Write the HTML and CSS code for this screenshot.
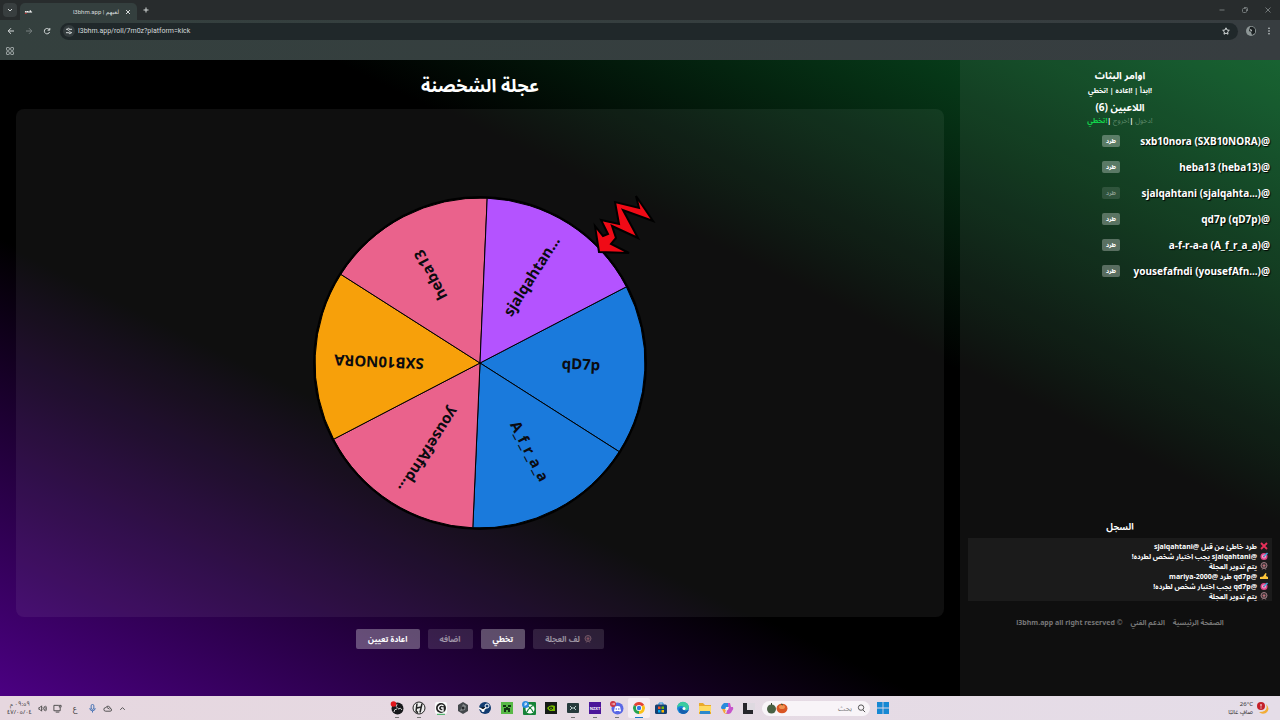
FILE: index.html
```html
<!DOCTYPE html>
<html lang="ar">
<head>
    <meta charset="UTF-8">
    <meta name="viewport" content="width=device-width, initial-scale=1.0">
    <title>لعبهم | l3bhm.app</title>
    <link rel="stylesheet" href="styles.css">
</head>
<body>

<!-- Browser bar -->
<header class="browser">
    <div class="tabs">
        <button class="tab-menu" aria-label="Search tabs"><svg class="icon" viewBox="0 0 8 8"><path d="M2 3l2 2 2-2"/></svg></button>
        <div class="tab">
            <svg class="favicon" viewBox="0 0 10 8"><path d="M1 4h8M2 3v1M4 3v1M7 2v2" stroke="#fff" stroke-width="1.2"/><path d="M1 5.5h2" stroke="#d33"/></svg>
            <span class="tab-title" dir="rtl">لعبهم | l3bhm.app</span>
            <button aria-label="Close"><svg class="icon" viewBox="0 0 8 8"><path d="M2 2l4 4M6 2l-4 4"/></svg></button>
        </div>
        <button class="new-tab" aria-label="New tab"><svg class="icon" viewBox="0 0 8 8"><path d="M4 1.5v5M1.5 4h5"/></svg></button>
        <div class="window-buttons">
            <button aria-label="Minimize"><svg class="icon" viewBox="0 0 8 8"><path d="M1.5 4h5"/></svg></button>
            <button aria-label="Restore"><svg class="icon" viewBox="0 0 8 8"><rect x="1.5" y="2.5" width="4" height="4" rx="1"/><path d="M3 1.5h2.500q1 0 1 1V5"/></svg></button>
            <button aria-label="Close window"><svg class="icon" viewBox="0 0 8 8"><path d="M1.5 1.5l5 5M6.500 1.500l-5 5"/></svg></button>
        </div>
    </div>
    <div class="toolbar">
        <button aria-label="Back"><svg class="icon" viewBox="0 0 8 8"><path d="M7 4H1.200M4 1.200L1.200 4 4 6.800"/></svg></button>
        <button class="off" aria-label="Forward"><svg class="icon" viewBox="0 0 8 8"><path d="M1 4h5.800M4 1.200L6.800 4 4 6.800"/></svg></button>
        <button aria-label="Reload"><svg class="icon" viewBox="0 0 8 8"><path d="M6.500 3A2.700 2.700 0 1 0 6.600 5M6.800 1v2.200H4.600"/></svg></button>
        <div class="address">
            <span class="site-info"><svg class="icon" viewBox="0 0 8 8"><path d="M1 2.300h1.500M5 2.300h2M1 5.700h2.500M6 5.700h1"/><circle cx="3.500" cy="2.300" r="1"/><circle cx="4.800" cy="5.700" r="1"/></svg></span>
            <input type="text" aria-label="Address" value="l3bhm.app/roll/7m0z?platform=kick">
            <button aria-label="Bookmark"><svg class="icon" viewBox="0 0 8 8"><path d="M4 .8l1 2.200 2.300.3-1.700 1.600.4 2.300L4 6.100 2 7.200l.4-2.300L.7 3.300 3 3z"/></svg></button>
        </div>
        <svg class="avatar" viewBox="0 0 10 10"><circle cx="5" cy="5" r="5" fill="#8d9696"/><path d="M4 1q3-1 5 2v4L6 9 5 6 3 5z" fill="#1b2022"/><path d="M4 3l2 1-1 2z" fill="#dfe3e3"/></svg>
        <button aria-label="Menu"><svg class="icon dots" viewBox="0 0 8 8"><circle cx="4" cy="1.200" r=".8"/><circle cx="4" cy="4" r=".8"/><circle cx="4" cy="6.800" r=".8"/></svg></button>
    </div>
    <div class="bookmarks">
        <button aria-label="Apps"><svg class="apps-icon" viewBox="0 0 8 8"><rect x=".5" y=".5" width="2.800" height="2.800" rx=".6"/><rect x="4.700" y=".5" width="2.800" height="2.800" rx=".6"/><rect x=".5" y="4.700" width="2.800" height="2.800" rx=".6"/><rect x="4.700" y="4.700" width="2.800" height="2.800" rx=".6"/></svg></button>
    </div>
</header>

<div class="page" dir="rtl">
    <!-- Players and log -->
    <aside class="sidebar">
        <h2>اوامر البثاث</h2>
        <p class="commands">!ابدأ | !اعاده | !تخطي</p>
        <h2>اللاعبين (6)</h2>
        <p class="commands"><span class="used">!دخول</span> |<span class="used">!خروج</span> |<span class="open">!تخطي</span></p>
        <ul class="players">
            <li><span>@sxb10nora (SXB10NORA)</span><button>طرد</button></li>
            <li><span>@heba13 (heba13)</span><button>طرد</button></li>
            <li><span>@sjalqahtani (sjalqahta...)</span><button disabled>طرد</button></li>
            <li><span>@qd7p (qD7p)</span><button>طرد</button></li>
            <li><span>@a-f-r-a-a (A_f_r_a_a)</span><button>طرد</button></li>
            <li><span>@yousefafndi (yousefAfn...)</span><button>طرد</button></li>
        </ul>
        <h3>السجل</h3>
        <ul class="log">
            <li><svg viewBox="0 0 8 8"><path d="M1 1l6 6M7 1L1 7" stroke="#e8305a" stroke-width="1.8"/></svg>طرد خاطئ من قبل @sjalqahtani</li>
            <li><svg viewBox="0 0 8 8"><use href="#target"/></svg>@sjalqahtani يجب اختيار شخص لطرده!</li>
            <li><svg viewBox="0 0 8 8"><use href="#ferris"/></svg>يتم تدوير العجلة</li>
            <li><svg viewBox="0 0 8 8"><path d="M0 7V5l3-.5L5.500 1l1 .5L6 4l2 1v2z" fill="#fdc63a"/></svg>@qd7p طرد @mariya-2000</li>
            <li><svg viewBox="0 0 8 8"><use href="#target"/></svg>@qd7p يجب اختيار شخص لطرده!</li>
            <li><svg viewBox="0 0 8 8"><use href="#ferris"/></svg>يتم تدوير العجلة</li>
        </ul>
        <footer>
            <a href="#">الصفحة الرئيسية</a>
            <a href="#">الدعم الفني</a>
            <span>© l3bhm.app all right reserved</span>
        </footer>
    </aside>

    <!-- Wheel -->
    <main class="game">
        <h1>عجلة الشخصنة</h1>
        <div class="board">
            <svg class="wheel" viewBox="-170 -170 340 340" direction="ltr">
                <g id="slices"></g>
                <circle r="166" fill="none" stroke="#000" stroke-width="2"/>
                <path class="pointer" d="M119-111L115-137 123-127 128-129 121-143 139-139 135-161 159-155 156-167 173-142 143-153 158-125 132-137 136-125 131-119 149-110z"/>
            </svg>
        </div>
        <div class="controls">
            <button disabled><svg viewBox="0 0 8 8"><use href="#ferris"/></svg>لف العجلة</button>
            <button>تخطي</button>
            <button disabled>اضافه</button>
            <button>اعادة تعيين</button>
        </div>
    </main>
</div>

<!-- Taskbar -->
<div class="taskbar">
    <div class="tray">
        <div class="clock" dir="rtl">٠٩:٥٩ م<br>٤٧/٠٥/٠٤</div>
        <svg class="line" viewBox="0 0 10 10"><path d="M1 4v2h1l2 2V2L2 4zM5.500 3.500q1 1.500 0 3M7 2.500q2 2.500 0 5M8.500 2q2 3 0 6"/></svg>
        <svg class="line" viewBox="0 0 10 10"><path d="M6.500 1.500H1v6h7V4M3 9h4M7 1.500h2v2H7z"/></svg>
        <span class="language">ع</span>
        <svg class="line mic" viewBox="0 0 10 10"><rect x="3.500" y=".5" width="3" height="5.500" rx="1.500"/><path d="M2 4.500q0 3 3 3t3-3M5 7.500v2"/></svg>
        <svg class="line" viewBox="0 0 10 10"><path d="M3 8q-2 0-2-2t2-2q1-2 3-1.500T8 5q1.500 0 1.500 1.500T8 8zM4 4q2 0 3 2"/></svg>
        <svg class="line" viewBox="0 0 10 10"><path d="M2.500 6.500L5 4l2.500 2.500"/></svg>
    </div>

    <div class="apps">
        <button class="running" aria-label="OBS"><svg viewBox="0 0 14 14"><circle cx="7.500" cy="7.500" r="6" fill="#17181b"/><path d="M7 3q-2 3 1 4.500M8 8q3-2 4 1M7 8q-3 0-3 3" stroke="#ccc" fill="none"/><circle cx="3.500" cy="3" r="2.800" fill="#e1151b"/></svg></button>
        <button class="running" aria-label="Streaming"><svg viewBox="0 0 14 14"><circle cx="7" cy="7" r="6" fill="#eee" stroke="#222"/><path d="M5 2.500l-1 8M10 2.500l-2 9M5 7l4-1M4 10.500l2 1" stroke="#222" stroke-width="1.5"/></svg></button>
        <button aria-label="G Hub"><svg viewBox="0 0 14 14"><rect x="1" y="1" width="12" height="12" rx="2" fill="#fafafa"/><circle cx="7" cy="7" r="5" fill="#242424"/><path d="M9.500 5Q7 3 5 5.500T7 10h2V7H7" stroke="#fff" fill="none" stroke-width="1.3"/><path d="M3 13.300h8" stroke="#32a856"/></svg></button>
        <button aria-label="Cube"><svg viewBox="0 0 14 14"><path d="M7 1l5 3v6l-5 3-5-3V4z" fill="#44484c"/><path d="M7 3l3 2-1 4-5 1z" fill="#85898c"/><circle cx="7" cy="7" r="1.500" fill="#25282b"/></svg></button>
        <button aria-label="Steam"><svg viewBox="0 0 14 14"><circle cx="7" cy="7" r="6" fill="#123c70"/><path d="M1 7l4 2 4-3" stroke="#fff" stroke-width="1.5"/><circle cx="9" cy="5" r="2" fill="#123c70" stroke="#fff"/><circle cx="5" cy="9.500" r="1.500" fill="#fff"/></svg></button>
        <button aria-label="Minecraft"><svg viewBox="0 0 14 14"><path fill="#58b947" d="M1 1h12v12H1z"/><path fill="#123513" d="M3 4h3v2H3zM8 4h3v2H8zM6 6h2v1h2v4H8V9H6v2H4V7h2z"/></svg></button>
        <button aria-label="Xbox"><svg viewBox="0 0 14 14"><rect x="1" y="1" width="13" height="13" rx="1" fill="#168338"/><circle cx="8" cy="8" r="4.500" fill="#fff"/><path d="M5 4.500q2 1 3 2.500 1-1.500 3-2.500M5 11q1-3 3-4 2 1 3 4" stroke="#168338" fill="none" stroke-width="1.3"/><circle cx="3.500" cy="3.500" r="3.500" fill="#2b8ae0"/><path d="M3 5V2h1.500v1.500H3" stroke="#fff" fill="none" stroke-width=".7"/></svg></button>
        <button aria-label="NVIDIA"><svg viewBox="0 0 14 14"><path fill="#151a16" d="M1 1h12v12H1z"/><path d="M3 7q3-4 8-2v5H6Q4 9 3 7z" fill="#76b900"/><path d="M5 7q2-2 4 0-2 3-4 0z" stroke="#151a16" fill="none"/></svg></button>
        <button class="running" aria-label="Screen"><svg viewBox="0 0 14 14"><rect x="1" y="2" width="12" height="10" rx="1" fill="#263a3c"/><path d="M4 5l2 2-2 2M10 5L8 7l2 2M6 7h2" stroke="#b8cac9" fill="none"/></svg></button>
        <button class="running" aria-label="NZXT"><svg viewBox="0 0 14 14"><path fill="#4b159a" d="M1 1h12v12H1z"/><text x="7" y="9" class="nzxt">NZXT</text></svg></button>
        <button class="running" aria-label="Discord"><svg viewBox="0 0 14 14"><circle cx="7.500" cy="7.500" r="6" fill="#5967e5"/><path d="M4 10l1-4.500q2.500-1 5 0L11 10q-1 1-2 0H6q-1 1-2 0z" fill="#fff"/><circle cx="6.300" cy="8" r=".8" fill="#5967e5"/><circle cx="8.800" cy="8" r=".8" fill="#5967e5"/><circle cx="3" cy="3" r="3" fill="#cf3441"/><path d="M1.500 3h1.500M4 1.800v2.400M3 3h2" stroke="#fff" stroke-width=".6"/></svg></button>
        <button class="running active" aria-label="Chrome"><svg viewBox="0 0 14 14"><path d="M7 7L1.800 4A6 6 0 0 1 12.200 4z" fill="#e34133"/><path d="M7 7l5.200-3A6 6 0 0 1 7 13z" fill="#fbc116"/><path d="M7 7v6A6 6 0 0 1 1.800 4z" fill="#26a350"/><circle cx="7" cy="7" r="3" fill="#fff"/><circle cx="7" cy="7" r="2.200" fill="#3678e5"/></svg></button>
        <button aria-label="Store"><svg viewBox="0 0 14 14"><path d="M5 4V2h4v2" stroke="#2494df" fill="none"/><rect x="1" y="3.500" width="12" height="9.500" rx="1.500" fill="#123f72"/><path d="M4 5.500h2.500V8H4z" fill="#f25022"/><path d="M7.500 5.500H10V8H7.500z" fill="#7fba00"/><path d="M4 9h2.500v2.500H4z" fill="#00a4ef"/><path d="M7.500 9H10v2.500H7.500z" fill="#ffb900"/></svg></button>
        <button aria-label="Edge"><svg viewBox="0 0 14 14"><circle cx="7" cy="7" r="6" fill="#1686d9"/><path d="M1 7A6 6 0 0 1 13 6.500Q12 10 8 9 9 5 5 5 2 5 1 7z" fill="#3bcba0"/><path d="M13 9Q8 11 7 8 5 6 3 8q0 5 5 5 3-.5 5-4z" fill="#155fae"/><circle cx="8" cy="7.500" r="1.500" fill="#fff"/></svg></button>
        <button aria-label="Files"><svg viewBox="0 0 14 14"><path d="M1 2h4l2 2h6v9H1z" fill="#e9a92c"/><path d="M1 5h12v6H1z" fill="#ffda61"/><path d="M2 10h10v3H2z" fill="#2d88cd"/></svg></button>
        <button aria-label="Copilot"><svg viewBox="0 0 14 14"><path d="M4 2h4q2 0 2 2l-2 4H2Q0 7 2 4z" fill="#298bdc"/><path d="M8 2h2l1 4h2q1 2-1 4-1 3-4 3H6l2-6z" fill="#c654cb"/><path d="M2 8h4l-1 4h3q-4 2-5-2z" fill="#f7a535"/><path d="M6 6h3L8 9H5z" fill="#eee"/></svg></button>
        <button aria-label="Desktop"><svg viewBox="0 0 14 14"><path d="M1 2h10v11H1z" fill="#26252b"/><path d="M5 2h8v7H5z" fill="#ded9e0"/></svg></button>
        <label class="search" dir="rtl">
            <svg class="line" viewBox="0 0 10 10"><circle cx="4.500" cy="4" r="3"/><path d="M6.500 6.500L9 9"/></svg>
            <input type="text" placeholder="بحث" aria-label="بحث">
            <svg class="fruit" viewBox="0 0 22 12"><circle cx="5.500" cy="7" r="4.500" fill="#496044"/><path d="M5.500 3V1" stroke="#34442d"/><ellipse cx="16" cy="6.500" rx="5.500" ry="4.800" fill="#d95524"/><ellipse cx="16" cy="5" rx="3" ry="2" fill="#ef9250"/><path d="M15 2l2 1" stroke="#34562c"/></svg>
        </label>
        <button aria-label="Start"><svg viewBox="0 0 14 14"><path d="M1 1h5.600v5.600H1zM7.400 1H13v5.600H7.400zM1 7.400h5.600V13H1zM7.400 7.400H13V13H7.400z" fill="#1688d3"/></svg></button>
    </div>

    <div class="weather" dir="rtl">
        <svg viewBox="0 0 14 14"><path d="M10 3q3 8-7 8 3 3 7 1 5-4 0-9z" fill="#f2ad35"/><circle cx="5" cy="5" r="4" fill="#c42029"/><path d="M5 3v2.500M5 6.500v1" stroke="#fff"/></svg>
        <div><span dir="ltr">26°C</span><br>صافٍ غالبًا</div>
    </div>
</div>

<!-- Shared symbols -->
<svg class="symbols">
    <symbol id="target" viewBox="0 0 8 8"><circle cx="4" cy="4.500" r="3.500" fill="#e04287"/><circle cx="4" cy="4.500" r="2" fill="#e9b6d5"/><circle cx="4" cy="4.500" r="1" fill="#c42b72"/><path d="M4 4.500L7.500 1" stroke="#3caee0" stroke-width="1.4"/></symbol>
    <symbol id="ferris" viewBox="0 0 8 8"><circle cx="4" cy="3.500" r="3" fill="none" stroke="#a58189"/><path d="M4 .5v6M1 3.500h6M2 1.500l4 4M6 1.500l-4 4M4 4L2 8M4 4l2 4" stroke="#8f6b74" stroke-width=".6"/><circle cx="4" cy="3.500" r="1" fill="#c76b76"/></symbol>
</svg>

<script>
    const players = [
        { name: 'qD7p', color: '#1a7adc' },
        { name: 'A_f_r_a_a', color: '#1a7adc' },
        { name: 'yousefAfnd...', color: '#ea628c' },
        { name: 'SXB10NORA', color: '#f7a00a' },
        { name: 'heba13', color: '#ea628c' },
        { name: 'sjalqahtan...', color: '#b453ff' }
    ];
    const svgNS = 'http://www.w3.org/2000/svg';
    const slices = document.getElementById('slices');
    const radius = 165;
    const rotation = 2.5;
    const step = 360 / players.length;

    function pointAt(angle) {
        const rad = angle * Math.PI / 180;
        return (radius * Math.cos(rad)) + ' ' + (radius * Math.sin(rad));
    }

    players.forEach((player, i) => {
        const middle = rotation + i * step;
        const path = document.createElementNS(svgNS, 'path');
        path.setAttribute('d', `M0 0L${pointAt(middle - step / 2)}A${radius} ${radius} 0 0 1 ${pointAt(middle + step / 2)}z`);
        path.setAttribute('fill', player.color);
        slices.appendChild(path);

        const label = document.createElementNS(svgNS, 'text');
        label.setAttribute('x', 101);
        label.setAttribute('y', -2);
        label.setAttribute('transform', `rotate(${middle})`);
        label.textContent = player.name;
        slices.appendChild(label);
    });
</script>

</body>
</html>
```
FILE: styles.css
```css
* {
    box-sizing: border-box;
}
body {
    display: flex;
    flex-direction: column;
    min-height: 100vh;
    margin: 0;
    font-family: "Noto Sans", "Noto Sans Arabic", "DejaVu Sans", sans-serif;
    color: #fff;
    background-color: #000;
}
h1, h2, h3, p, ul {
    margin: 0;
    padding: 0;
}
ul {
    list-style: none;
}
button, input {
    margin: 0;
    padding: 0;
    border: 0;
    background: none;
    color: inherit;
    font-family: inherit;
}
input {
    min-width: 0;
    outline: none;
}
svg {
    display: block;
    flex: none;
}
.symbols {
    position: absolute;
    width: 0;
    height: 0;
}

/* Browser */
.browser {
    background: linear-gradient(to right, #34403e, #373d40);
    color: #d5dada;
    font-family: Roboto, "Noto Sans", "DejaVu Sans", sans-serif;
}
.browser button {
    display: flex;
    align-items: center;
    justify-content: center;
    width: 18px;
    height: 14px;
}
.icon {
    width: 8px;
    height: 8px;
    fill: none;
    stroke: currentColor;
    stroke-width: 1;
}
.dots {
    fill: currentColor;
    stroke: none;
}
.tabs {
    display: flex;
    align-items: center;
    height: 20px;
    padding: 0 3px;
    background-color: #282c2d;
}
.browser .tab-menu {
    width: 14px;
    border-radius: 4px;
    background-color: #383e3f;
}
.tab {
    display: flex;
    align-items: center;
    align-self: flex-end;
    width: 117px;
    height: 17px;
    margin-left: 3px;
    padding-left: 4px;
    border-radius: 5px 5px 0 0;
    background-color: #343f3e;
}
.favicon {
    width: 9px;
    height: 8px;
}
.tab-title {
    flex: 1;
    font-size: 6px;
    line-height: 12px;
    white-space: nowrap;
}
.window-buttons {
    display: flex;
    gap: 5px;
    margin-left: auto;
    color: #73797a;
}
.toolbar {
    display: flex;
    align-items: center;
    height: 22px;
    padding: 0 2px;
}
.browser .off {
    color: #788080;
}
.address {
    display: flex;
    flex: 1;
    align-items: center;
    height: 17px;
    margin: 0 8px 0 4px;
    padding: 0 3px;
    border-radius: 9px;
    background-color: #20282a;
}
.address input {
    flex: 1;
    padding-left: 3px;
    font-size: 7px;
    line-height: 12px;
}
.site-info {
    display: flex;
    align-items: center;
    justify-content: center;
    width: 12px;
    height: 12px;
    border-radius: 6px;
    background-color: #343c3e;
}
.avatar {
    width: 10px;
    height: 10px;
    margin-right: 4px;
}
.bookmarks {
    display: flex;
    align-items: center;
    height: 18px;
    padding: 0 1px;
}
.apps-icon {
    width: 8px;
    height: 8px;
    fill: none;
    stroke: #a5adad;
}

/* Page */
.page {
    display: flex;
    flex: 1;
    background: linear-gradient(to top right, #4b0082, #000 36%, #000 63%, #0a5a26);
}
.sidebar {
    display: flex;
    flex: 1;
    flex-direction: column;
    min-width: 0;
    padding: 7px 8px 67px;
    background-color: rgba(255, 255, 255, 0.06);
    text-align: center;
}
.sidebar h2 {
    font-size: 10px;
    line-height: 16px;
}
.sidebar h3 {
    margin-bottom: 4px;
    font-size: 9px;
    line-height: 14px;
}
.commands {
    font-size: 7px;
    font-weight: bold;
    line-height: 16px;
}
.commands + h2 + .commands {
    line-height: 12px;
}
.used {
    font-weight: normal;
    color: #5f8a6c;
}
.open {
    color: #12d44c;
}
.players {
    flex: 1;
    padding-top: 1px;
}
.players li {
    display: grid;
    grid-template-columns: 1fr 1fr;
    align-items: center;
    height: 26px;
    padding: 0 2px;
    font-size: 10px;
    font-weight: bold;
    text-align: start;
    white-space: nowrap;
    text-shadow: 1px 1px 1px #000;
}
.players button, .controls button {
    border-radius: 2px;
    background-color: rgba(255, 255, 255, 0.3);
    color: #fff;
    font-weight: bold;
}
.players button {
    justify-self: start;
    width: 18px;
    height: 12px;
    font-size: 6px;
    line-height: 12px;
}
.players button:disabled {
    background-color: rgba(255, 255, 255, 0.12);
    color: rgba(255, 255, 255, 0.4);
}
.log {
    padding: 3px 4px 0;
    background-color: rgba(255, 255, 255, 0.05);
    font-size: 7px;
    font-weight: bold;
}
.log li {
    display: flex;
    align-items: center;
    gap: 3px;
    height: 10px;
    white-space: nowrap;
}
.log svg, .controls svg {
    width: 8px;
    height: 8px;
}
.sidebar footer {
    display: flex;
    justify-content: center;
    gap: 8px;
    margin-top: 16px;
    color: #777;
    font-size: 7px;
    font-weight: bold;
    line-height: 12px;
    white-space: nowrap;
}
.sidebar a {
    color: inherit;
    text-decoration: none;
}
.game {
    display: flex;
    flex: 0 0 75%;
    flex-direction: column;
    padding: 0 16px 47px;
}
h1 {
    padding-top: 1px;
    font-size: 18px;
    line-height: 48px;
    text-align: center;
}
.board {
    display: flex;
    flex: 1;
    align-items: center;
    justify-content: center;
    border-radius: 8px;
    background-color: rgba(255, 255, 255, 0.06);
}
.wheel {
    width: 340px;
    height: 340px;
    overflow: visible;
}
.wheel path {
    stroke: #000;
    stroke-width: 1;
}
.wheel text {
    fill: #0b0b10;
    font-size: 15px;
    font-weight: bold;
    text-anchor: middle;
    dominant-baseline: middle;
}
.wheel .pointer {
    fill: #f00a16;
    stroke-width: 2;
}
.controls {
    display: flex;
    justify-content: center;
    gap: 8px;
    margin-top: 12px;
}
.controls button {
    display: flex;
    align-items: center;
    gap: 4px;
    height: 20px;
    padding: 0 12px;
    font-size: 8px;
}
.controls button:disabled {
    background-color: rgba(255, 255, 255, 0.12);
    color: rgba(255, 255, 255, 0.5);
}
.controls button:disabled svg {
    opacity: 0.6;
}

/* Taskbar */
.taskbar {
    display: grid;
    grid-template-columns: 1fr auto 1fr;
    height: 24px;
    background: linear-gradient(to right, #e6d7df, #e5dde8);
    color: #333;
}
.tray, .apps, .weather {
    display: flex;
    align-items: center;
}
.tray {
    gap: 6px;
    padding-left: 8px;
}
.clock, .weather {
    font-size: 6px;
    line-height: 8px;
}
.clock {
    width: 24px;
    text-align: center;
}
.line {
    width: 9px;
    height: 9px;
    fill: none;
    stroke: #444;
    stroke-width: 1;
}
.language {
    width: 14px;
    font-size: 8px;
    text-align: center;
}
.mic {
    stroke: #3568b0;
}
.apps button {
    position: relative;
    display: flex;
    align-items: center;
    justify-content: center;
    width: 22px;
    height: 20px;
}
.apps button svg {
    width: 14px;
    height: 14px;
}
.apps .running::after {
    content: "";
    position: absolute;
    bottom: 0;
    width: 4px;
    height: 1px;
    background-color: #777;
}
.apps .active {
    border-radius: 2px;
    background-color: #f5edf3;
}
.apps .active::after {
    width: 8px;
    background-color: #1878c8;
}
.nzxt {
    fill: #fff;
    font-size: 4px;
    font-weight: bold;
    text-anchor: middle;
}
.search {
    display: flex;
    align-items: center;
    width: 108px;
    height: 15px;
    margin: 0 2px;
    padding: 0 4px;
    border-radius: 8px;
    background-color: #f8f4f8;
}
.search input {
    flex: 1;
    padding-right: 5px;
    font-size: 7px;
}
.fruit {
    width: 22px;
    height: 12px;
}
.weather {
    gap: 3px;
    padding-right: 10px;
}
.weather svg {
    width: 14px;
    height: 14px;
}
```
